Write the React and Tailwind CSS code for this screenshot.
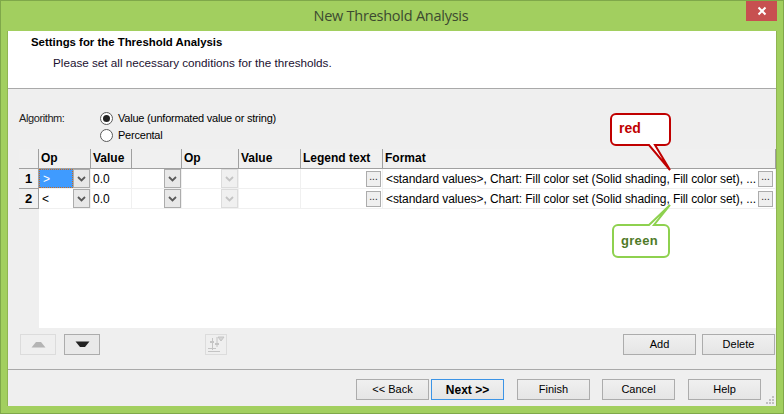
const columns = 'grid-cols-[20px_52px_41px_50px_57px_62px_82px_393px]';
const sans = 'font-["Liberation_Sans",sans-serif]';

const Chevron = ({ disabled }) => (
  <svg width="9" height="6" viewBox="0 0 9 6">
    <path d="M1 1l3.5 3.5L8 1" fill="none" stroke={disabled ? '#c4c4c4' : '#5a5a5a'} strokeWidth="1.8" />
  </svg>
);

const ComboButton = ({ disabled }) => (
  <div
    className={`w-[17px] h-[19px] shrink-0 flex items-center justify-center border ${
      disabled ? 'border-[#dcdcdc] bg-[#f0f0f0]' : 'border-[#acacac] bg-[#e8e8e8]'
    }`}
  >
    <Chevron disabled={disabled} />
  </div>
);

const DotsButton = () => (
  <div className="w-[15px] h-[16px] shrink-0 border border-[#acacac] bg-[#efefef] flex items-center justify-center text-[10px] leading-none pb-1 text-[#222]">
    ...
  </div>
);

const HeaderCell = ({ children }) => (
  <div className="bg-[#f0f0f0] border-r border-b border-[#a0a0a0] h-[20px] px-[2px] text-[12px] font-bold text-black whitespace-nowrap">
    {children}
  </div>
);

const Cell = ({ children, className = '' }) => (
  <div className={`bg-white border-r border-b border-[#f0f0f0] h-[20px] flex items-center overflow-hidden ${className}`}>
    {children}
  </div>
);

const Row = ({ num, op, selected }) => (
  <>
    <div className="bg-[#f0f0f0] border-r border-b border-[#a0a0a0] h-[20px] flex items-center justify-center font-bold text-[13px] text-black">
      {num}
    </div>
    <Cell className="justify-between">
      <div className={`flex-1 h-[19px] flex items-center pl-[3px] text-[12px] ${selected ? 'bg-[#3f9bff] text-white border border-dotted border-[#c96a1e]' : 'text-black'}`}>
        {op}
      </div>
      <ComboButton />
    </Cell>
    <Cell className="pl-[2px] text-[12px] text-black">0.0</Cell>
    <Cell className="justify-end">
      <ComboButton />
    </Cell>
    <Cell className="justify-end">
      <ComboButton disabled />
    </Cell>
    <Cell />
    <Cell className="justify-end pr-[1px]">
      <DotsButton />
    </Cell>
    <Cell className="justify-between pl-[3px] pr-[2px] text-[12px] text-black whitespace-nowrap">
      <span className="tracking-[-0.08px]">&lt;standard values&gt;, Chart: Fill color set (Solid shading, Fill color set), ...</span>
      <DotsButton />
    </Cell>
  </>
);

const DialogButton = ({ children, primary, bold }) => (
  <button
    className={`w-[73px] h-[21px] border text-black bg-gradient-to-b from-[#f0f0f0] to-[#e5e5e5] ${
      primary ? 'border-[#3c94e6]' : 'border-[#acacac]'
    } ${bold ? 'font-bold text-[12px]' : 'text-[11px]'}`}
  >
    {children}
  </button>
);

const Radio = ({ checked, children }) => (
  <div className="flex items-center gap-[5px] h-[17px]">
    <div className="w-[13px] h-[13px] rounded-full border border-[#5a5a5a] bg-white flex items-center justify-center">
      {checked && <div className="w-[7px] h-[7px] rounded-full bg-[#222]" />}
    </div>
    <span className="text-[11px] text-black tracking-[-0.22px]">{children}</span>
  </div>
);

export default function App() {
  return (
    <div className={`relative w-[784px] h-[414px] bg-[#a2cf5f] border border-[#7fa84a] flex flex-col ${sans}`}>
      {/* Title bar */}
      <div className="relative h-[30px] shrink-0 flex items-center justify-center pr-[2px]">
        <span className={`text-[14.5px] text-[#3c4a30] font-["Open_Sans",sans-serif] tracking-[-0.25px]`}>New Threshold Analysis</span>
        <div className="absolute right-[6px] top-0 w-[31px] h-[20px] bg-[#c75050] flex items-center justify-center">
          <svg width="10" height="10" viewBox="0 0 10 10">
            <path d="M1.5 1.5l7 7M8.5 1.5l-7 7" stroke="white" strokeWidth="2" />
          </svg>
        </div>
      </div>

      {/* Client area */}
      <div className="mx-[6px] h-[375px] bg-[#efefef] border-l border-r border-[#8fb551] flex flex-col">
        <div className="h-[58px] shrink-0 bg-white border-b border-[#a9a9a9] pl-[23px] pt-[4px]">
          <div className="text-[11.4px] font-bold text-black leading-[15px]">Settings for the Threshold Analysis</div>
          <div className="text-[11.7px] text-[#1a1030] leading-[15px] mt-[5px] pl-[22px]">Please set all necessary conditions for the thresholds.</div>
        </div>

        <div className="flex-1 flex flex-col pl-[11px] pt-[20px]">
          <div className="flex h-[40px]">
            <div className="w-[81px] text-[11px] text-[#222] tracking-[-0.4px] pt-[1px]">Algorithm:</div>
            <div className="pt-[1px]">
              <Radio checked>Value (unformated value or string)</Radio>
              <Radio>Percental</Radio>
            </div>
          </div>

          {/* Thresholds table */}
          <div className="bg-white w-[757px] h-[179px] relative">
            <div className={`grid ${columns} absolute top-0 left-0 w-[757px]`}>
              <HeaderCell />
              <HeaderCell>Op</HeaderCell>
              <HeaderCell>Value</HeaderCell>
              <HeaderCell />
              <HeaderCell>Op</HeaderCell>
              <HeaderCell>Value</HeaderCell>
              <HeaderCell>Legend text</HeaderCell>
              <HeaderCell>Format</HeaderCell>
              <Row num="1" op=">" selected />
              <Row num="2" op="<" />
            </div>
            <div className="absolute left-0 top-[60px] w-[20px] h-[119px] bg-[#efefef]" />
          </div>

          {/* Toolbar */}
          <div className="flex items-center h-[21px] mt-[6px] pl-[1px] pr-[1px]">
            <button className="w-[36px] h-[21px] border border-[#dcdcdc] flex items-center justify-center">
              <svg width="15" height="7" viewBox="0 0 15 7"><path d="M0.5 6.5L5 1h5l4.5 5.5z" fill="#b4b4b4" /></svg>
            </button>
            <button className="ml-[8px] w-[36px] h-[21px] border border-[#acacac] bg-[#e9e9e9] flex items-center justify-center">
              <svg width="15" height="7" viewBox="0 0 15 7"><path d="M0.5 0.5L5 6h5l4.5-5.5z" fill="#222" /></svg>
            </button>
            <button className="ml-[105px] w-[22px] h-[21px] border border-[#dcdcdc] flex items-center justify-center">
              <svg width="18" height="17" viewBox="0 0 18 17" fill="none" stroke="#c4c4c4">
                <path d="M5.5 2v12M10 1v10M1 12.5h8M1 15.5h12" />
                <path d="M3 6h4M8 8h4" strokeWidth="2" />
                <path d="M11 1h6l-3 4z" fill="#d6d6d6" />
              </svg>
            </button>
            <div className="flex-1" />
            <DialogButton>Add</DialogButton>
            <div className="w-[6px]" />
            <DialogButton>Delete</DialogButton>
          </div>

          <div className="h-[14px]" />
        </div>

        {/* Footer */}
        <div className="h-[37px] shrink-0 border-t border-[#a9a9a9] relative flex justify-end items-start pt-[9px] pr-[15px]">
          <div className="flex">
            <DialogButton>&lt;&lt; Back</DialogButton>
            <div className="w-[2px]" />
            <DialogButton primary bold>Next &gt;&gt;</DialogButton>
            <div className="w-[13px]" />
            <DialogButton>Finish</DialogButton>
            <div className="w-[12px]" />
            <DialogButton>Cancel</DialogButton>
            <div className="w-[13px]" />
            <DialogButton>Help</DialogButton>
          </div>
          <svg className="absolute right-[1px] bottom-[1px]" width="9" height="9" viewBox="0 0 9 9" fill="#c0c0c0">
            <rect x="6" y="0" width="2" height="2" />
            <rect x="3" y="3" width="2" height="2" />
            <rect x="6" y="3" width="2" height="2" />
            <rect x="0" y="6" width="2" height="2" />
            <rect x="3" y="6" width="2" height="2" />
            <rect x="6" y="6" width="2" height="2" />
          </svg>
        </div>
      </div>

      {/* Callouts over the table */}
      <svg className="absolute left-[607px] top-[111px]" width="70" height="60" viewBox="0 0 70 60" fill="white" stroke="#c00000" strokeWidth="2">
        <path d="M8 2h49a5 5 0 0 1 5 5v21a5 5 0 0 1-5 5h-10L62 58 41 33H8a5 5 0 0 1-5-5V7a5 5 0 0 1 5-5z" />
      </svg>
      <div className="absolute left-[618px] top-[118px] text-[14px] leading-[18px] font-bold text-[#c00000]">red</div>

      <svg className="absolute left-[607px] top-[202px]" width="70" height="56" viewBox="0 0 70 56" fill="white" stroke="#8ed14f" strokeWidth="2">
        <path d="M10 22H41L62 2 46 22H56a5 5 0 0 1 5 5v22a5 5 0 0 1-5 5H10a5 5 0 0 1-5-5V27a5 5 0 0 1 5-5z" />
      </svg>
      <div className="absolute left-[620px] top-[231px] text-[13px] leading-[18px] font-bold text-[#4f7a28] tracking-[0.3px]">green</div>
    </div>
  );
}
